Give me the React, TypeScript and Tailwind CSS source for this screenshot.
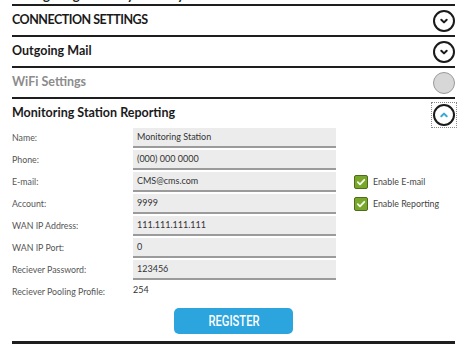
const SECTIONS = [
  { title: "CONNECTION SETTINGS", state: "closed", caps: true },
  { title: "Outgoing Mail", state: "closed", caps: false },
  { title: "WiFi Settings", state: "disabled", caps: false },
];

const FIELDS = [
  { label: "Name:", value: "Monitoring Station" },
  { label: "Phone:", value: "(000) 000 0000" },
  { label: "E-mail:", value: "CMS@cms.com", check: "Enable E-mail" },
  { label: "Account:", value: "9999", check: "Enable Reporting" },
  { label: "WAN IP Address:", value: "111.111.111.111" },
  { label: "WAN IP Port:", value: "0" },
  { label: "Reciever Password:", value: "123456" },
];

const Chevron = ({ up = false }: { up?: boolean }) => (
  <svg width="10" height="10" viewBox="0 0 10 10" fill="none">
    <path
      d={up ? "M2.3 6.3 L5 3.6 L7.7 6.3" : "M2.3 3.7 L5 6.4 L7.7 3.7"}
      stroke={up ? "#3ba7d3" : "#1a1a1a"}
      strokeWidth="2"
      strokeLinecap="round"
      strokeLinejoin="round"
    />
  </svg>
);

const Toggle = ({ state }: { state: string }) => {
  if (state === "disabled") {
    return <span className="w-[22px] h-[22px] rounded-full border-[1.5px] border-[#9a9a9a] bg-[#d7d7d7]" />;
  }
  return (
    <span className="w-[22px] h-[22px] rounded-full border-2 border-[#1a1a1a] flex items-center justify-center bg-white">
      <Chevron up={state === "open"} />
    </span>
  );
};

const CheckBox = ({ label }: { label: string }) => (
  <div className="flex items-center gap-[5px]">
    <span className="w-[14px] h-[14px] rounded-[2px] border border-[#4f6b1e] bg-[#79a72c] flex items-center justify-center">
      <svg width="10" height="10" viewBox="0 0 10 10" fill="none">
        <path d="M1.8 5.2 L4 7.3 L8.3 2.8" stroke="#f4f8ec" strokeWidth="1.8" strokeLinecap="round" strokeLinejoin="round" />
      </svg>
    </span>
    <span className="text-[8.8px] text-[#444]">{label}</span>
  </div>
);

export default function App() {
  return (
    <div className="w-[467px] h-[348px] bg-white overflow-hidden px-[12px] font-['Lato',sans-serif]">
      {/* page title scrolled out of view, only its descenders show */}
      <div className="h-[4px] overflow-hidden">
        <span className="block -mt-[11.5px] text-[13px] leading-[13px] font-bold text-[#222]">Configuring Gateway Security</span>
      </div>

      {SECTIONS.map(({ title, state, caps }) => (
        <div key={title} className="border-t-2 border-[#1e1e1e] h-[31px] flex items-center justify-between">
          <span
            className={`${state === "disabled" ? "text-[#8c8c8c]" : "text-[#1a1a1a]"} ${
              caps ? "tracking-[-0.5px]" : ""
            } text-[12.5px] font-bold`}
          >
            {title}
          </span>
          <Toggle state={state} />
        </div>
      ))}

      <div className="border-t-2 border-[#1e1e1e]">
        <div className="h-[28px] flex items-center justify-between">
          <span className="text-[12.5px] font-bold text-[#1a1a1a]">Monitoring Station Reporting</span>
          <span className="mt-[4px] -mr-[2px] p-[1px] border border-dotted border-[#8a8a8a]">
            <Toggle state="open" />
          </span>
        </div>

        <div className="flex flex-col">
          {FIELDS.map(({ label, value, check }) => (
            <div key={label} className="h-[22px] flex items-center">
              <span className="w-[121px] text-[8.8px] text-[#555]">{label}</span>
              <div className="w-[203px] h-[20px] bg-[#ececec] border-b-2 border-[#9b9b9b] flex items-center px-[4px] text-[9px] text-[#333]">
                {value}
              </div>
              {check && (
                <div className="ml-[18px]">
                  <CheckBox label={check} />
                </div>
              )}
            </div>
          ))}
          <div className="h-[22px] flex items-center">
            <span className="w-[121px] text-[8.8px] text-[#555]">Reciever Pooling Profile:</span>
            <span className="text-[9px] text-[#333] -mt-[4px]">254</span>
          </div>
        </div>

        <div className="flex justify-center mt-[5px]">
          <button className="w-[119px] h-[26px] rounded-[5px] bg-[#2ca4dd] text-white flex items-center justify-center">
            <span className="inline-block scale-x-[0.8] text-[14px] font-medium font-['Roboto',sans-serif]">REGISTER</span>
          </button>
        </div>

        <div className="mt-[7px] border-t-[3px] border-[#1e1e1e]" />
      </div>
    </div>
  );
}
